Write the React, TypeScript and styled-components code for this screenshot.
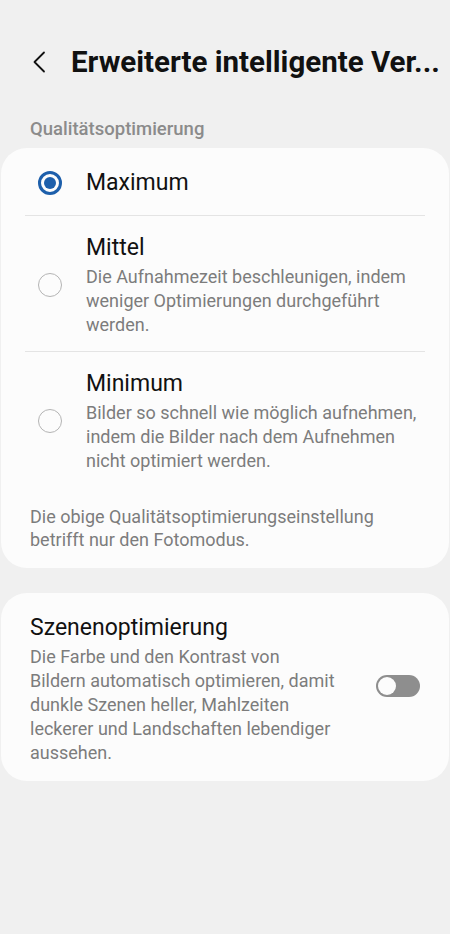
import React from 'react';
import styled, { createGlobalStyle } from 'styled-components';

const GlobalStyle = createGlobalStyle`
  html, body {
    margin: 0;
    padding: 0;
    background: #f0f0f0;
    font-family: Roboto, "Noto Sans", "Liberation Sans", sans-serif;
  }
`;

const Page = styled.div`
  width: 450px;
  min-height: 934px;
  background: #f0f0f0;
  box-sizing: border-box;
  padding: 0 1px;
`;

const Header = styled.div`
  display: flex;
  align-items: center;
  height: 44px;
  margin-top: 40px;
  padding-left: 28px;
  gap: 22px;
`;

const BackButton = styled.button`
  border: none;
  background: none;
  padding: 0;
  width: 20px;
  height: 24px;
  display: flex;
  align-items: center;
  justify-content: center;
`;

const Title = styled.h1`
  margin: 0;
  font-size: 29.5px;
  font-weight: 700;
  color: #111;
  white-space: nowrap;
`;

const SectionLabel = styled.div`
  font-size: 18.5px;
  font-weight: 500;
  color: #8b8b8b;
  padding: 34px 0 0 29px;
  height: 30px;
`;

const Card = styled.div<{ $top?: number }>`
  background: #fcfcfc;
  border-radius: 26px;
  margin-top: ${p => p.$top ?? 0}px;
`;

const OptionList = styled.div`
  padding: 0 24px;
`;

const OptionRow = styled.div<{ $last?: boolean }>`
  display: flex;
  align-items: center;
  gap: 24px;
  min-height: 68px;
  padding: 17px 0 14px 13px;
  box-sizing: border-box;
  border-bottom: ${p => (p.$last ? 'none' : '1px solid #e4e4e4')};
`;

const Radio = styled.span<{ $checked?: boolean }>`
  flex: none;
  width: 24px;
  height: 24px;
  border-radius: 50%;
  box-sizing: border-box;
  border: ${p => (p.$checked ? '3px solid #1d5fab' : '1.5px solid #b4b4b4')};
  display: flex;
  align-items: center;
  justify-content: center;
  &::after {
    content: '';
    display: ${p => (p.$checked ? 'block' : 'none')};
    width: 12px;
    height: 12px;
    border-radius: 50%;
    background: #1d5fab;
  }
`;

const OptionText = styled.div`
  display: flex;
  flex-direction: column;
  gap: 2px;
`;

const ItemTitle = styled.div`
  font-size: 23px;
  line-height: 30px;
  color: #111;
`;

const Desc = styled.div`
  font-size: 18px;
  line-height: 24px;
  color: #7c7c7c;
`;

const Footnote = styled(Desc)`
  padding: 18px 29px 17px 29px;
  line-height: 23px;
`;

const SwitchRow = styled.div`
  display: flex;
  align-items: center;
  justify-content: space-between;
  padding: 20px 29px 16px 29px;
`;

const SwitchText = styled(OptionText)`
  width: 325px;
`;

const Toggle = styled.span<{ $on?: boolean }>`
  flex: none;
  width: 44px;
  height: 22px;
  margin-bottom: 6px;
  border-radius: 11px;
  background: #8e8e8e;
  box-sizing: border-box;
  padding: 2px;
  display: flex;
  justify-content: ${p => (p.$on ? 'flex-end' : 'flex-start')};
  &::after {
    content: '';
    width: 18px;
    height: 18px;
    border-radius: 50%;
    background: #fcfcfc;
  }
`;

const options = [
  { title: 'Maximum', desc: '', checked: true },
  {
    title: 'Mittel',
    desc: 'Die Aufnahmezeit beschleunigen, indem weniger Optimierungen durchgeführt werden.',
  },
  {
    title: 'Minimum',
    desc: 'Bilder so schnell wie möglich aufnehmen, indem die Bilder nach dem Aufnehmen nicht optimiert werden.',
  },
];

const App = () => (
  <Page>
    <GlobalStyle />
    <Header>
      <BackButton aria-label="Zurück">
        <svg width="14" height="22" viewBox="0 0 14 22" fill="none">
          <path d="M12 1.5L2.5 11L12 20.5" stroke="#111" strokeWidth="1.8" strokeLinecap="round" strokeLinejoin="round" />
        </svg>
      </BackButton>
      <Title>Erweiterte intelligente Ver...</Title>
    </Header>
    <SectionLabel>Qualitätsoptimierung</SectionLabel>
    <Card>
      <OptionList>
        {options.map((o, i) => (
          <OptionRow key={o.title} $last={i === options.length - 1}>
            <Radio $checked={o.checked} />
            <OptionText>
              <ItemTitle>{o.title}</ItemTitle>
              {o.desc && <Desc>{o.desc}</Desc>}
            </OptionText>
          </OptionRow>
        ))}
      </OptionList>
      <Footnote>Die obige Qualitätsoptimierungseinstellung betrifft nur den Fotomodus.</Footnote>
    </Card>
    <Card $top={25}>
      <SwitchRow>
        <SwitchText>
          <ItemTitle>Szenenoptimierung</ItemTitle>
          <Desc>
            Die Farbe und den Kontrast von
            <br />
            Bildern automatisch optimieren, damit
            <br />
            dunkle Szenen heller, Mahlzeiten
            <br />
            leckerer und Landschaften lebendiger
            <br />
            aussehen.
          </Desc>
        </SwitchText>
        <Toggle />
      </SwitchRow>
    </Card>
  </Page>
);

export default App;
